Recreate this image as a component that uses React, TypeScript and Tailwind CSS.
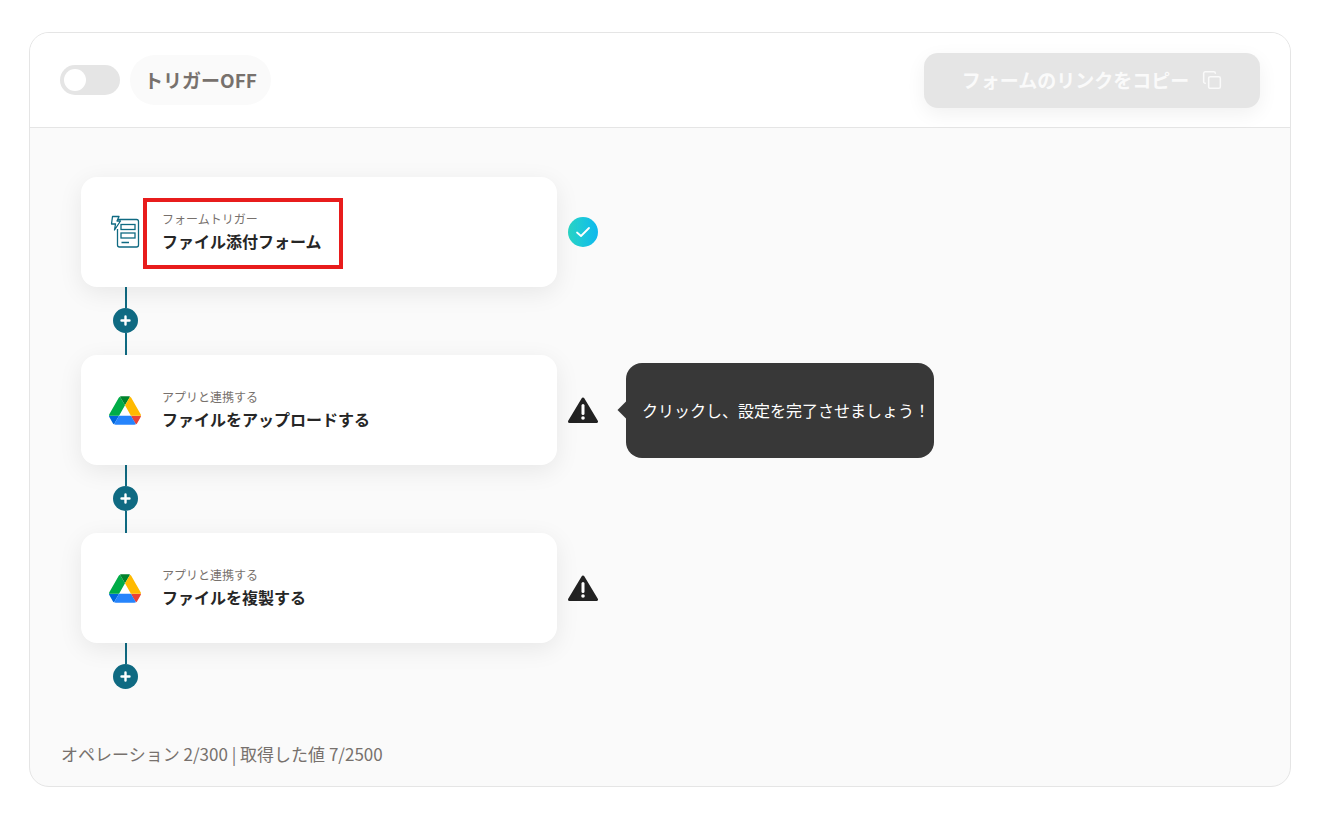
import { Copy } from "lucide-react";

const FormIcon = () => (
  <svg width="32" height="36" viewBox="0 0 32 36" fill="none" stroke="#0f6a82" strokeWidth="1.3">
    <path d="M8.5 5.5H27.5a2 2 0 0 1 2 2V31a2 2 0 0 1-2 2H10.5a2 2 0 0 1-2-2V15" />
    <rect x="12" y="10.5" width="14" height="5" />
    <rect x="12" y="19" width="14" height="5" />
    <path d="M12.5 28.5H20" strokeWidth="1.6" />
    <path d="M3.5 2.5H10L8 7h3.5L5.5 16 6.5 10H2.5Z" fill="#ffffff" strokeLinejoin="round" />
  </svg>
);

const DriveIcon = () => (
  <svg width="32" height="29" viewBox="0 0 87.3 78">
    <path d="m6.6 66.85 3.85 6.65c.8 1.4 1.95 2.5 3.3 3.3l13.75-23.8H0c0 1.55.4 3.1 1.2 4.5z" fill="#0066da" />
    <path d="M43.65 25 29.9 1.2c-1.35.8-2.5 1.9-3.3 3.3L1.2 48.5A9.06 9.06 0 0 0 0 53h27.5z" fill="#00ac47" />
    <path d="M73.55 76.8c1.35-.8 2.5-1.9 3.3-3.3l1.6-2.75 7.65-13.25c.8-1.4 1.2-2.95 1.2-4.5H59.8l5.85 11.5z" fill="#ea4335" />
    <path d="M43.65 25 57.4 1.2C56.05.4 54.5 0 52.9 0H34.4c-1.6 0-3.15.45-4.5 1.2z" fill="#00832d" />
    <path d="M59.8 53H27.5L13.75 76.8c1.35.8 2.9 1.2 4.5 1.2h50.8c1.6 0 3.15-.45 4.5-1.2z" fill="#2684fc" />
    <path d="M73.4 26.5 60.7 4.5c-.8-1.4-1.95-2.5-3.3-3.3L43.65 25 59.8 53h27.45c0-1.55-.4-3.1-1.2-4.5z" fill="#ffba00" />
  </svg>
);

const Warning = () => (
  <svg width="30" height="27" viewBox="0 0 30 27" className="shrink-0">
    <path d="M15 2 28.5 24.5H1.5Z" fill="#222222" stroke="#222222" strokeWidth="3" strokeLinejoin="round" />
    <path d="M15 8.5v8" stroke="#ffffff" strokeWidth="3" strokeLinecap="round" />
    <circle cx="15" cy="21" r="1.8" fill="#ffffff" />
  </svg>
);

const Check = () => (
  <div className="w-[30px] h-[30px] rounded-full bg-gradient-to-r from-[#2ad5c4] to-[#0fb8ee] flex items-center justify-center shrink-0">
    <svg width="16" height="12" viewBox="0 0 16 12" fill="none" stroke="#ffffff" strokeWidth="1.8" strokeLinecap="round" strokeLinejoin="round">
      <path d="M2 6.5 6 10 14 2" />
    </svg>
  </div>
);

// connector line with the add button on it
const Connector = ({ last }: { last?: boolean }) => (
  <div className="w-[25px] ml-[32px] flex flex-col items-center">
    <div className="w-[2px] h-[21px] bg-[#0f6a82]" />
    <div className="w-[25px] h-[25px] rounded-full bg-[#0f6a82] flex items-center justify-center shrink-0">
      <svg width="11" height="11" viewBox="0 0 11 11" stroke="#ffffff" strokeWidth="2.4" strokeLinecap="round">
        <path d="M5.5 1.5v8M1.5 5.5h8" />
      </svg>
    </div>
    {!last && <div className="w-[2px] h-[22px] bg-[#0f6a82]" />}
  </div>
);

const Step = ({ icon, sub, title, status, highlight, tip }: {
  icon: React.ReactNode;
  sub: string;
  title: string;
  status: React.ReactNode;
  highlight?: boolean;
  tip?: string;
}) => (
  <div className="flex items-center">
    <div className="relative w-[476px] h-[110px] bg-white rounded-[16px] shadow-[0_6px_24px_rgba(0,0,0,0.08)] flex items-center pl-[28px]">
      <div className="w-[32px] flex justify-center shrink-0">{icon}</div>
      <div className="ml-[21px] flex flex-col">
        <span className="text-[12px] leading-[16px] text-[#77716d]">{sub}</span>
        <span className="text-[16px] leading-[24px] font-bold text-[#262626] mt-[2px]">{title}</span>
      </div>
      {highlight && <div className="absolute left-[62px] top-[21px] w-[200px] h-[71px] border-[4px] border-[#e81c1c]" />}
    </div>
    <div className="ml-[11px]">{status}</div>
    {tip && (
      <div className="relative ml-[28px] w-[308px] h-[95px] rounded-[16px] bg-[#383838] flex items-center pl-[16px] text-[16px] text-white">
        <div className="absolute left-[-6px] top-[41px] w-[12px] h-[12px] rotate-45 bg-[#383838]" />
        <span className="relative">{tip}</span>
      </div>
    )}
  </div>
);

export default function App() {
  return (
    <div className="min-h-[813px] bg-white pt-[32px] pl-[29px] pr-[28px] font-['Noto_Sans_CJK_JP',sans-serif]">
      <div className="h-[755px] rounded-[20px] border border-[#e5e5e5] overflow-hidden flex flex-col bg-[#fafafa]">
        <div className="h-[95px] shrink-0 bg-white border-b border-[#e5e5e5] flex items-center justify-between pl-[30px] pr-[30px]">
          <div className="flex items-center gap-[10px]">
            <div className="w-[60px] h-[30px] rounded-full bg-[#e5e5e5] flex items-center pl-[4px]">
              <div className="w-[22px] h-[22px] rounded-full bg-white" />
            </div>
            <div className="h-[50px] px-[14px] rounded-full bg-[#fafafa] flex items-center text-[19px] font-bold text-[#77716d]">
              トリガーOFF
            </div>
          </div>
          <div className="w-[336px] h-[55px] rounded-[14px] bg-[#e5e5e5] shadow-[0_6px_20px_rgba(0,0,0,0.06)] flex items-center justify-center gap-[13px] text-[19px] font-bold text-[#fafafa]">
            フォームのリンクをコピー
            <Copy size={20} strokeWidth={1.8} />
          </div>
        </div>
        <div className="flex-1 flex flex-col pl-[51px] pt-[49px]">
          <Step icon={<FormIcon />} sub="フォームトリガー" title="ファイル添付フォーム" status={<Check />} highlight />
          <Connector />
          <Step icon={<DriveIcon />} sub="アプリと連携する" title="ファイルをアップロードする" status={<Warning />} tip="クリックし、設定を完了させましょう！" />
          <Connector />
          <Step icon={<DriveIcon />} sub="アプリと連携する" title="ファイルを複製する" status={<Warning />} />
          <Connector last />
        </div>
        <div className="pl-[31px] pb-[20px] text-[17px] leading-[24px] text-[#77716d]">
          オペレーション 2/300 | 取得した値 7/2500
        </div>
      </div>
    </div>
  );
}
